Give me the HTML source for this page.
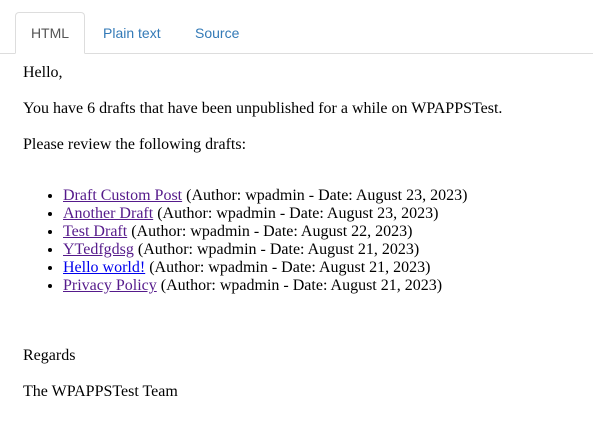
<!DOCTYPE html>
<html><head><meta charset="utf-8"><style>
body{margin:0;width:593px;height:433px;background:#fff;overflow:hidden;font-family:"Liberation Serif",serif;font-size:16px;color:#000}
.tabs{position:absolute;left:0;top:0;width:593px;height:54px;border-bottom:1px solid #ddd;box-sizing:border-box}
.tab{position:absolute;top:12px;height:42px;font-family:"Liberation Sans",sans-serif;font-size:14px;line-height:43px;color:#337ab7}
.tab.active{left:15px;width:70px;border:1px solid #ddd;border-bottom:1px solid #fff;border-radius:4px 4px 0 0;box-sizing:border-box;text-align:center;color:#555;background:#fff;line-height:41px}
p{position:absolute;left:23px;margin:0;line-height:18px;white-space:nowrap}
ul{position:absolute;left:23px;top:187px;margin:0;padding-left:40px;line-height:18px;white-space:nowrap}
a{color:#551a8b}
a.b{color:#0000ee}
</style></head><body>
<div class="tabs">
<div class="tab active">HTML</div>
<div class="tab" style="left:103px">Plain text</div>
<div class="tab" style="left:195px">Source</div>
</div>
<p style="top:64px">Hello,</p>
<p style="top:100px">You have 6 drafts that have been unpublished for a while on WPAPPSTest.</p>
<p style="top:136px">Please review the following drafts:</p>
<ul>
<li><a href="#">Draft Custom Post</a> (Author: wpadmin - Date: August 23, 2023)</li>
<li><a href="#">Another Draft</a> (Author: wpadmin - Date: August 23, 2023)</li>
<li><a href="#">Test Draft</a> (Author: wpadmin - Date: August 22, 2023)</li>
<li><a href="#">YTedfgdsg</a> (Author: wpadmin - Date: August 21, 2023)</li>
<li><a class="b" href="#">Hello world!</a> (Author: wpadmin - Date: August 21, 2023)</li>
<li><a href="#">Privacy Policy</a> (Author: wpadmin - Date: August 21, 2023)</li>
</ul>
<p style="top:347px">Regards</p>
<p style="top:383px">The WPAPPSTest Team</p>
</body></html>
